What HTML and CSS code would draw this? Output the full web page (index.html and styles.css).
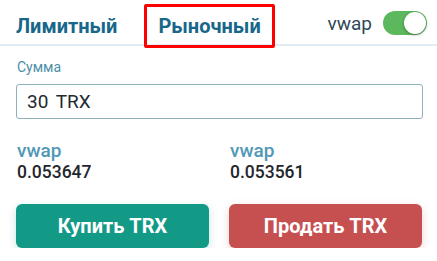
FILE: index.html
```html
<!DOCTYPE html>
<html lang="ru">
<head>
<meta charset="utf-8">
<link rel="stylesheet" href="styles.css">
</head>
<body>
<div class="panel">
  <div class="header">
    <div class="tab">Лимитный</div>
    <div class="tab tab-active">Рыночный</div>
    <div class="spacer"></div>
    <span class="vwap-switch-label">vwap</span>
    <span class="toggle"><span class="knob"></span></span>
  </div>
  <div class="content">
    <label class="field-label">Сумма</label>
    <div class="input">30 TRX</div>
    <div class="stats">
      <div class="stat">
        <div class="stat-label">vwap</div>
        <div class="stat-value">0.053647</div>
      </div>
      <div class="stat">
        <div class="stat-label">vwap</div>
        <div class="stat-value">0.053561</div>
      </div>
    </div>
    <div class="actions">
      <button class="btn btn-buy">Купить TRX</button>
      <button class="btn btn-sell">Продать TRX</button>
    </div>
  </div>
</div>
</body>
</html>
```

FILE: styles.css
```css
* { box-sizing: border-box; }
html, body { margin: 0; padding: 0; background: #ffffff; }
body { font-family: Roboto, "Liberation Sans", Arial, sans-serif; color: #222a30; }

.panel { width: 437px; }

.header {
  display: flex;
  align-items: flex-start;
  height: 46px;
  border-bottom: 2px solid #e1ecf4;
  padding: 0 10px 0 2px;
}
.tab {
  height: 44px;
  margin-top: 4px;
  display: flex;
  align-items: center;
  padding: 0 11px;
  border: 3px solid transparent;
  border-radius: 2px;
  font-size: 20px;
  font-weight: 700;
  color: #17678a;
  position: relative;
  z-index: 1;
}
.tab + .tab { margin-left: 13px; }
.tab-active { border-color: #ff0000; }
.spacer { flex: 1; }
.vwap-switch-label {
  align-self: center;
  margin-top: 2px;
  font-size: 19px;
  color: #2f4858;
  margin-right: 11px;
}
.toggle {
  align-self: center;
  margin-top: 2px;
  width: 44px;
  height: 24px;
  border-radius: 12px;
  background: #5cb85c;
  display: flex;
  justify-content: flex-end;
  align-items: center;
  padding: 1px;
}
.knob {
  width: 22px;
  height: 22px;
  border-radius: 50%;
  background: #fff;
  box-shadow: 0 1px 3px rgba(0,0,0,0.35);
}

.content { padding: 0 14px 0 16px; }
.field-label {
  display: block;
  margin-top: 13px;
  font-size: 14px;
  line-height: 16px;
  color: #4d8ea8;
  padding-left: 1px;
}
.input {
  margin-top: 9px;
  height: 35px;
  border: 1px solid #8fb0be;
  border-radius: 3px;
  padding-left: 10px;
  display: flex;
  align-items: center;
  font-size: 19px;
  color: #222a30;
  word-spacing: 3px;
}
.stats {
  display: grid;
  grid-template-columns: 213px 1fr;
  margin-top: 21px;
  padding-left: 1px;
}
.stat-label {
  font-size: 19px;
  line-height: 22px;
  color: #4f98b6;
  font-weight: 500;
}
.stat-value {
  font-size: 17.5px;
  line-height: 20px;
  font-weight: 500;
  color: #1f262c;
}
.actions {
  display: flex;
  gap: 20px;
  margin-top: 22px;
}
.btn {
  width: 193px;
  height: 44px;
  border: none;
  border-radius: 6px;
  font-family: Roboto, "Liberation Sans", Arial, sans-serif;
  font-size: 20px;
  font-weight: 700;
  color: #fff;
}
.btn-buy { background: #139a87; box-shadow: 0 3px 8px rgba(19,154,135,0.25); }
.btn-sell { background: #c65050; box-shadow: 0 3px 8px rgba(198,80,80,0.25); }
```
